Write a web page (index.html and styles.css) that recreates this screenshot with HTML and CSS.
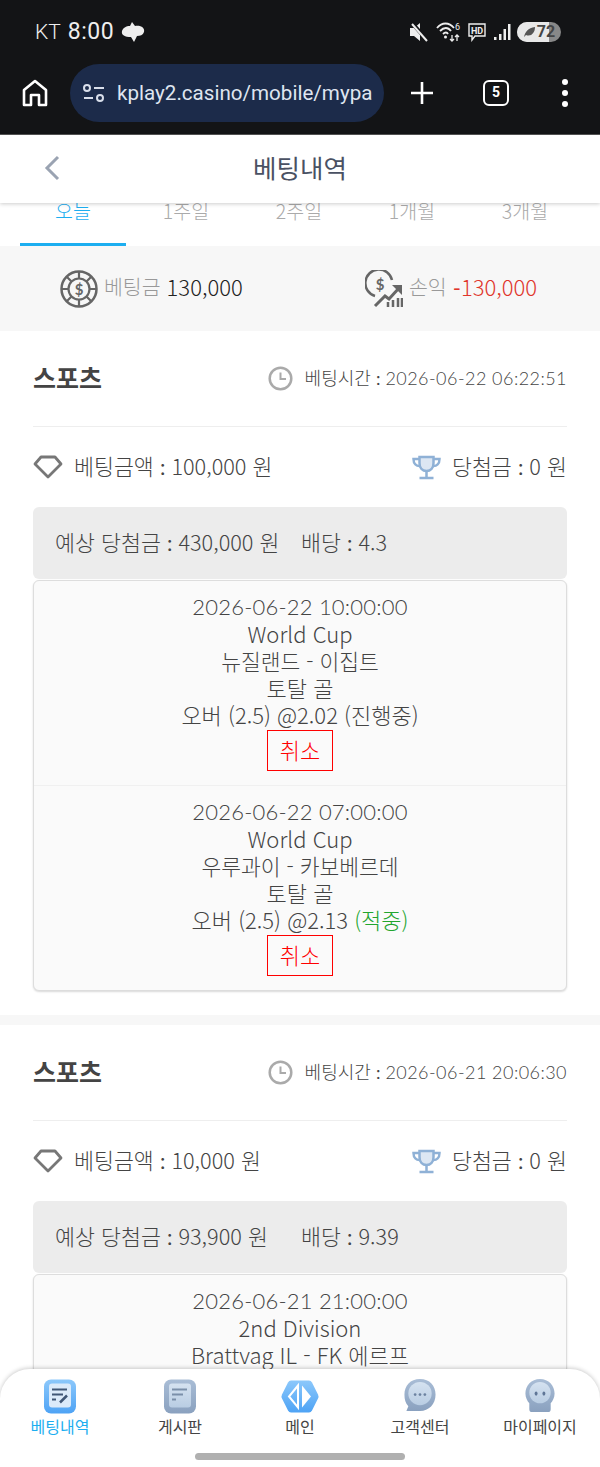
FILE: index.html
```html
<!DOCTYPE html>
<html lang="ko">
<head>
    <meta charset="UTF-8">
    <title>베팅내역</title>
    <link rel="stylesheet" href="styles.css">
</head>
<body>
<div class="phone">
    <div class="status-bar">
        <div class="status-bar__left">
            <span class="status-bar__carrier">KT</span>
            <span class="status-bar__time">8:00</span>
            <svg width="24" height="22" viewBox="0 0 24 22"><path d="M11 1 L14 5 C20 4 24 7 23 11 C22 14 19 15 16 15 L13 21 L10 16 C4 16 0 14 1 10 C2 7 5 5 9 5 Z" fill="#eee"/></svg>
        </div>
        <div class="status-bar__right">
            <svg width="22" height="20" viewBox="0 0 22 20"><path d="M2 6 H6 L12 1 V19 L6 14 H2 Z" fill="#eee"/><path d="M4 1 L19 18" stroke="#131416" stroke-width="4"/><path d="M4 2 L19 19" stroke="#eee" stroke-width="2"/></svg>
            <svg width="25" height="22" viewBox="0 0 25 22" fill="none" stroke="#eee" stroke-width="1.8"><path d="M1 7 C6 1 13 1 18 7"/><path d="M4 10 C8 6 12 6 15 10"/><path d="M7 13 C9 11 11 11 12 13"/><circle cx="9.500" cy="16" r="1.500" fill="#eee" stroke="none"/><path d="M16 14 V20 M14 18 L16 20 L18 18 M21 20 V14 M19 16 L21 14 L23 16" stroke-width="1.300"/><text x="19" y="9" class="status-bar__tiny">6</text></svg>
            <svg width="20" height="20" viewBox="0 0 20 20" fill="none" class="status-bar__hd" stroke="#eee" stroke-width="1.400"><path d="M2 2 H18 V14 H8 L5 18 V14 H2 Z"/><text x="10" y="12" class="status-bar__hd-text">HD</text></svg>
            <svg width="18" height="18" viewBox="0 0 18 18" fill="#eee"><rect x="1" y="14" width="2.500" height="3"/><rect x="6" y="11" width="2.500" height="6"/><rect x="10.500" y="6" width="2.500" height="11"/><rect x="15" y="1" width="2.500" height="16"/></svg>
            <div class="battery">
                <div class="battery__fill"></div>
                <svg class="battery__leaf" width="13" height="12" viewBox="0 0 13 12"><path d="M1 11 C2 6 5 2 12 1 C12 7 8 11 3 9 Z" fill="#555"/></svg>
                <span class="battery__num">72</span>
            </div>
        </div>
    </div>

    <div class="browser-bar">
        <svg class="browser-bar__home" width="26" height="28" viewBox="0 0 26 28" fill="none" stroke="#fff" stroke-width="2.600" stroke-linejoin="round"><path d="M2 26 V11 L13 2 L24 11 V26 H17 V16 H9 V26 Z"/></svg>
        <div class="address-pill">
            <svg width="24" height="20" viewBox="0 0 24 20" fill="none" stroke="#d8deea" stroke-width="2"><circle cx="5" cy="5" r="3"/><path d="M12 5 H22 M2 15 H11"/><circle cx="18" cy="15" r="3"/></svg>
            <span class="address-pill__url">kplay2.casino/mobile/mypa</span>
        </div>
        <svg class="browser-bar__plus" width="24" height="24" viewBox="0 0 24 24" stroke="#fff" stroke-width="2.600"><path d="M12 1 V23 M1 12 H23"/></svg>
        <div class="browser-bar__tabs">5</div>
        <div class="browser-bar__menu"><span></span><span></span><span></span></div>
    </div>

    <header class="top-header">
        <svg class="top-header__back" width="16" height="26" viewBox="0 0 16 26" fill="none" stroke="#9aa3b2" stroke-width="3"><path d="M14 2 L3 13 L14 24"/></svg>
        <h1 class="top-header__title">베팅내역</h1>
    </header>

    <nav class="period-tabs">
        <div class="period-tabs__item period-tabs__item--active">오늘</div>
        <div class="period-tabs__item">1주일</div>
        <div class="period-tabs__item">2주일</div>
        <div class="period-tabs__item">1개월</div>
        <div class="period-tabs__item">3개월</div>
    </nav>

    <section class="stats">
        <div class="stats__item">
            <svg width="38" height="38" viewBox="0 0 38 38" fill="none" stroke="#666">
                <circle cx="19" cy="19" r="17.500" stroke-width="2.500"/>
                <circle cx="19" cy="19" r="10.500" stroke-width="2.200"/>
                <path d="M19 2 V8 M19 30 V36 M2 19 H8 M30 19 H36 M7 7 L11.500 11.500 M31 7 L26.500 11.500 M7 31 L11.500 26.500 M31 31 L26.500 26.500" stroke-width="2.200"/>
                <text x="19" y="24.500" class="stats__dollar">$</text>
            </svg>
            <span class="stats__label">베팅금</span>
            <span class="stats__value">130,000</span>
        </div>
        <div class="stats__item">
            <svg width="38" height="38" viewBox="0 0 38 38" fill="none" stroke="#666">
                <path d="M10 26 A13.500 13.500 0 1 1 27 10" stroke-width="2.500"/>
                <text x="15" y="20" class="stats__dollar">$</text>
                <path d="M10 36 L20 26 L24 29 L34 18" stroke-width="3"/>
                <path d="M27 15 H37 V25 Z" fill="#666" stroke="none"/>
                <path d="M23 32 V37 M28 30 V37 M33 28 V37 M37 28 V37" stroke-width="2.500"/>
            </svg>
            <span class="stats__label">손익</span>
            <span class="stats__value stats__value--loss"><span class="mark">-</span>130,000</span>
        </div>
    </section>

    <article class="bet-card">
        <div class="bet-card__head">
            <h2 class="bet-card__type">스포츠</h2>
            <div class="bet-card__time">
                <svg width="25" height="25" viewBox="0 0 25 25" fill="none" stroke="#aaa" stroke-width="2.500"><circle cx="12.500" cy="12.500" r="10.800"/><path d="M12.500 6.500 V13 H18" stroke-width="2"/></svg>
                <span class="bet-card__text">베팅시간 <span class="mark">:</span> <span class="bet-card__date">2026-06-22 06:22:51</span></span>
            </div>
        </div>
        <div class="bet-card__summary">
            <div class="bet-card__amount">
                <svg width="30" height="24" viewBox="0 0 30 24" fill="none" stroke="#777" stroke-width="2.800" stroke-linejoin="round"><path d="M8 2 H22 L28 9 L15 22 L2 9 Z"/></svg>
                <span class="bet-card__text">베팅금액 <span class="mark">:</span> 100,000 원</span>
            </div>
            <div class="bet-card__amount">
                <svg width="29" height="25" viewBox="0 0 28 25" fill="none" stroke="#8fb1d6" stroke-width="2.500"><path d="M7 2 H21 V8 C21 13 18 16 14 16 C10 16 7 13 7 8 Z" fill="#8fb1d6" fill-opacity="0.300"/><path d="M7 4 H1 C1 9 4 11 7 11 M21 4 H27 C27 9 24 11 21 11 M14 16 V22 M7 23 H21"/></svg>
                <span class="bet-card__text">당첨금 <span class="mark">:</span> 0 원</span>
            </div>
        </div>
        <div class="bet-card__expected">
            <span class="bet-card__text bet-card__win">예상 당첨금 <span class="mark">:</span> 430,000 원</span>
            <span class="bet-card__text">배당 <span class="mark">:</span> 4.3</span>
        </div>
        <div class="bet-table">
            <div class="bet-table__item">
                <div class="bet-table__date">2026-06-22 10:00:00</div>
                <div>World Cup</div>
                <div class="bet-table__teams">뉴질랜드 - 이집트</div>
                <div>토탈 골</div>
                <div>오버 (2.5) @2.02 (진행중)</div>
                <button class="bet-table__cancel">취소</button>
            </div>
            <div class="bet-table__item">
                <div class="bet-table__date">2026-06-22 07:00:00</div>
                <div>World Cup</div>
                <div class="bet-table__teams">우루과이 - 카보베르데</div>
                <div>토탈 골</div>
                <div>오버 (2.5) @2.13 <span class="bet-table__hit">(적중)</span></div>
                <button class="bet-table__cancel">취소</button>
            </div>
        </div>
    </article>

    <article class="bet-card">
        <div class="bet-card__head">
            <h2 class="bet-card__type">스포츠</h2>
            <div class="bet-card__time">
                <svg width="25" height="25" viewBox="0 0 25 25" fill="none" stroke="#aaa" stroke-width="2.500"><circle cx="12.500" cy="12.500" r="10.800"/><path d="M12.500 6.500 V13 H18" stroke-width="2"/></svg>
                <span class="bet-card__text">베팅시간 <span class="mark">:</span> <span class="bet-card__date">2026-06-21 20:06:30</span></span>
            </div>
        </div>
        <div class="bet-card__summary">
            <div class="bet-card__amount">
                <svg width="30" height="24" viewBox="0 0 30 24" fill="none" stroke="#777" stroke-width="2.800" stroke-linejoin="round"><path d="M8 2 H22 L28 9 L15 22 L2 9 Z"/></svg>
                <span class="bet-card__text">베팅금액 <span class="mark">:</span> 10,000 원</span>
            </div>
            <div class="bet-card__amount">
                <svg width="29" height="25" viewBox="0 0 28 25" fill="none" stroke="#8fb1d6" stroke-width="2.500"><path d="M7 2 H21 V8 C21 13 18 16 14 16 C10 16 7 13 7 8 Z" fill="#8fb1d6" fill-opacity="0.300"/><path d="M7 4 H1 C1 9 4 11 7 11 M21 4 H27 C27 9 24 11 21 11 M14 16 V22 M7 23 H21"/></svg>
                <span class="bet-card__text">당첨금 <span class="mark">:</span> 0 원</span>
            </div>
        </div>
        <div class="bet-card__expected">
            <span class="bet-card__text bet-card__win">예상 당첨금 <span class="mark">:</span> 93,900 원</span>
            <span class="bet-card__text">배당 <span class="mark">:</span> 9.39</span>
        </div>
        <div class="bet-table">
            <div class="bet-table__item">
                <div class="bet-table__date">2026-06-21 21:00:00</div>
                <div>2nd Division</div>
                <div>Brattvag IL - FK 에르프</div>
                <div>토탈 골</div>
            </div>
        </div>
    </article>

    <nav class="bottom-nav">
        <a class="bottom-nav__item bottom-nav__item--active">
            <svg width="34" height="34" viewBox="0 0 34 34">
                <defs>
                    <linearGradient id="blueTile" x1="0" y1="0" x2="0" y2="1"><stop offset="0" stop-color="#8cc8fb"/><stop offset="1" stop-color="#4ea3f5"/></linearGradient>
                    <linearGradient id="greyTile" x1="0" y1="0" x2="0" y2="1"><stop offset="0" stop-color="#a9bdd6"/><stop offset="1" stop-color="#8aa1bf"/></linearGradient>
                    <linearGradient id="paleTile" x1="0" y1="0" x2="0" y2="1"><stop offset="0" stop-color="#d5e2f0"/><stop offset="1" stop-color="#b9cde3"/></linearGradient>
                </defs>
                <rect x="1" y="0" width="32" height="34" rx="7" fill="url(#blueTile)"/>
                <rect x="6" y="4" width="22" height="24" rx="3" fill="#dbeafa"/>
                <path d="M9 10 H24 M9 15 H20 M9 20 H13" stroke="#3f5575" stroke-width="2"/>
                <path d="M17 23 L24 16" stroke="#3f5575" stroke-width="2.500"/>
            </svg>
            <span>베팅내역</span>
        </a>
        <a class="bottom-nav__item">
            <svg width="34" height="34" viewBox="0 0 34 34">
                <rect x="1" y="0" width="32" height="34" rx="7" fill="url(#greyTile)"/>
                <rect x="6" y="4" width="22" height="24" rx="3" fill="url(#paleTile)"/>
                <path d="M9 10 H24 M9 15 H20 M9 20 H13" stroke="#7b8fa9" stroke-width="2"/>
            </svg>
            <span>게시판</span>
        </a>
        <a class="bottom-nav__item">
            <svg width="38" height="34" viewBox="0 0 38 34">
                <path d="M10 1 H28 Q30 1 31 3 L37 15 Q38 17 37 19 L31 31 Q30 33 28 33 H10 Q8 33 7 31 L1 19 Q0 17 1 15 L7 3 Q8 1 10 1 Z" fill="url(#blueTile)"/>
                <path d="M17 6 L8 17 L17 28 Z" fill="none" stroke="#fff" stroke-width="2"/>
                <path d="M21 6 L30 17 L21 28 Z" fill="#fff"/>
            </svg>
            <span>메인</span>
        </a>
        <a class="bottom-nav__item">
            <svg width="34" height="36" viewBox="0 0 34 36">
                <path d="M17 0 C27 0 33 7 33 16 C33 26 26 33 17 33 H3 L5 28 C2 25 1 21 1 16 C1 7 7 0 17 0 Z" fill="url(#greyTile)"/>
                <circle cx="17" cy="15" r="12" fill="url(#paleTile)"/>
                <circle cx="12" cy="16" r="1.400" fill="#6c82a0"/><circle cx="17" cy="16" r="1.400" fill="#6c82a0"/><circle cx="22" cy="16" r="1.400" fill="#6c82a0"/>
            </svg>
            <span>고객센터</span>
        </a>
        <a class="bottom-nav__item">
            <svg width="32" height="36" viewBox="0 0 32 36">
                <path d="M16 0 C25 0 31 7 31 15 C31 19 29 23 27 25 V31 Q27 34 24 34 H8 Q5 34 5 31 V25 C3 23 1 19 1 15 C1 7 7 0 16 0 Z" fill="url(#greyTile)"/>
                <circle cx="16" cy="14" r="11" fill="url(#paleTile)"/>
                <ellipse cx="12" cy="15" rx="1.500" ry="2.200" fill="#5f7697"/><ellipse cx="20" cy="15" rx="1.500" ry="2.200" fill="#5f7697"/>
            </svg>
            <span>마이페이지</span>
        </a>
        <div class="bottom-nav__gesture"></div>
    </nav>
</div>
</body>
</html>
```

FILE: styles.css
```css
* {
    box-sizing: border-box;
}

html,
body {
    margin: 0;
    padding: 0;
}

body {
    font-family: "Noto Sans CJK KR", sans-serif;
    font-weight: 300;
    color: #444;
    background-color: #fff;
}

/* 콜론, 하이픈은 Lato 글리프가 더 비슷함 */
.mark {
    font-family: "Lato", sans-serif;
    font-weight: 400;
}

.phone {
    position: relative;
    width: 600px;
    height: 1467px;
    overflow: hidden;
}

/* 상태바 */
.status-bar {
    display: flex;
    justify-content: space-between;
    align-items: center;
    height: 63px;
    padding: 0 39px 0 35px;
    background-color: #131416;
    color: #eee;
    font-family: "Roboto", sans-serif;
}

.status-bar__left {
    display: flex;
    align-items: center;
    gap: 7px;
}

.status-bar__carrier {
    font-size: 21px;
    font-weight: 300;
}

.status-bar__time {
    font-size: 23px;
    font-weight: 400;
    letter-spacing: 0.5px;
}

.status-bar__right {
    display: flex;
    align-items: center;
    gap: 6px;
}

.status-bar__tiny {
    font: 400 9px "Roboto", sans-serif;
    fill: #eee;
    stroke: none;
}

.status-bar__hd-text {
    font: 700 9px "Roboto", sans-serif;
    fill: #eee;
    stroke: none;
    text-anchor: middle;
}

.battery {
    position: relative;
    display: flex;
    align-items: center;
    justify-content: center;
    gap: 1px;
    width: 44px;
    height: 20px;
    border-radius: 10px;
    background-color: #888;
    overflow: hidden;
}

.battery__fill {
    position: absolute;
    left: 0;
    top: 0;
    bottom: 0;
    width: 32px;
    background-color: #e8e8e8;
}

.battery__leaf,
.battery__num {
    position: relative;
}

.battery__num {
    color: #444;
    font-size: 16px;
    font-weight: 700;
}

/* 브라우저 주소창 */
.browser-bar {
    display: flex;
    align-items: center;
    height: 72px;
    padding: 0 0 11px 22px;
    background-color: #131416;
    border-bottom: 1px solid #555;
}

.browser-bar__home {
    flex: none;
}

.address-pill {
    display: flex;
    align-items: center;
    gap: 11px;
    width: 314px;
    height: 58px;
    margin-left: 22px;
    padding: 0 12px;
    border-radius: 29px;
    background-color: #1c2b4a;
}

.address-pill svg {
    flex: none;
}

.address-pill__url {
    color: #dfe5f0;
    font-family: "Roboto", sans-serif;
    font-size: 20.600px;
    font-weight: 400;
    white-space: nowrap;
}

.browser-bar__plus {
    margin-left: 26px;
}

.browser-bar__tabs {
    width: 26px;
    height: 26px;
    margin-left: 49px;
    border: 2.500px solid #fff;
    border-radius: 6px;
    color: #fff;
    font: 700 14px/21px "Roboto", sans-serif;
    text-align: center;
}

.browser-bar__menu {
    display: flex;
    flex-direction: column;
    gap: 5px;
    margin-left: 53px;
}

.browser-bar__menu span {
    width: 6px;
    height: 6px;
    border-radius: 50%;
    background-color: #fff;
}

/* 상단 타이틀 */
.top-header {
    position: relative;
    z-index: 2;
    display: flex;
    align-items: center;
    justify-content: center;
    height: 68px;
    padding-bottom: 5px;
    background-color: #fff;
    box-shadow: 0 1px 4px rgba(0, 0, 0, 0.2);
}

.top-header__back {
    position: absolute;
    left: 44px;
    top: 20px;
}

.top-header__title {
    margin: 0;
    color: #4a5163;
    font-size: 25.500px;
    font-weight: 400;
}

/* 기간 탭 */
.period-tabs {
    display: grid;
    grid-template-columns: repeat(5, 106px);
    gap: 7px;
    height: 63px;
    margin-top: -20px;
    padding: 0 0 0 20px;
}

.period-tabs__item {
    padding-top: 16px;
    color: #aaa;
    font-size: 19.500px;
    line-height: 24px;
    text-align: center;
}

.period-tabs__item--active {
    color: #1daef0;
    border-bottom: 3px solid #1daef0;
}

/* 베팅금 / 손익 */
.stats {
    display: flex;
    height: 85px;
    background-color: #f7f7f7;
}

.stats__item {
    display: flex;
    align-items: center;
    gap: 6px;
    font-size: 22px;
}

.stats__item:first-child {
    width: 365px;
    padding-left: 60px;
}

.stats__dollar {
    font: 700 15px "Lato", sans-serif;
    fill: #666;
    stroke: none;
    text-anchor: middle;
}

.stats__label,
.stats__value {
    margin-bottom: 5px;
}

.stats__label {
    color: #999;
    font-size: 20.500px;
}

.stats__value {
    color: #222;
}

.stats__value--loss {
    color: #e0352b;
}

/* 베팅 카드 */
.bet-card {
    height: 694px;
    padding: 0 33px;
    background-color: #fff;
    border-bottom: 10px solid #f7f7f7;
}

.bet-card__head {
    display: flex;
    justify-content: space-between;
    align-items: center;
    height: 96px;
    border-bottom: 1px solid #eee;
}

.bet-card__type {
    margin: 0 0 4px;
    color: #444;
    font-size: 25px;
    font-weight: 700;
}

.bet-card__time {
    display: flex;
    align-items: center;
    gap: 12px;
    font-size: 18px;
}

.bet-card__text {
    margin-bottom: 3px;
}

.bet-card__date {
    font-family: "Lato", sans-serif;
    letter-spacing: 0.450px;
}

.bet-card__summary {
    display: flex;
    justify-content: space-between;
    align-items: center;
    height: 80px;
    font-size: 21.700px;
}

.bet-card__amount {
    display: flex;
    align-items: center;
    gap: 11px;
}

.bet-card__expected {
    display: flex;
    align-items: center;
    height: 72px;
    padding: 0 22px;
    border-radius: 6px;
    background-color: #ececec;
    font-size: 21.700px;
}

.bet-card__win {
    width: 246px;
}

.bet-table {
    margin-top: 1px;
    border: 1px solid #ddd;
    border-radius: 6px;
    background-color: #fafafa;
    box-shadow: 0 1px 2px rgba(0, 0, 0, 0.15);
    font-size: 22px;
    line-height: 27px;
    text-align: center;
}

.bet-table__item {
    padding: 12px 0 14px;
    border-bottom: 1px solid #f0f0f0;
}

.bet-table__item:last-child {
    border-bottom: none;
}

.bet-table__date {
    font-family: "Lato", sans-serif;
    letter-spacing: 0.200px;
}

.bet-table__teams {
    font-size: 21.500px;
}

.bet-table__cancel {
    display: block;
    width: 66px;
    height: 41px;
    margin: 2px auto 0;
    padding: 0 0 3px;
    border: 1px solid #f00;
    background: none;
    color: #f00;
    font: inherit;
}

.bet-table__hit {
    color: #22a52e;
}

/* 하단 메뉴 */
.bottom-nav {
    position: absolute;
    left: 0;
    right: 0;
    bottom: 0;
    z-index: 3;
    display: grid;
    grid-template-columns: repeat(5, 120px);
    height: 98px;
    padding-top: 10px;
    border-radius: 30px 30px 0 0;
    background-color: #fff;
    box-shadow: 0 -1px 4px rgba(0, 0, 0, 0.2);
}

.bottom-nav__item {
    display: flex;
    flex-direction: column;
    align-items: center;
    height: 60px;
    color: #444;
    font-size: 16px;
    font-weight: 400;
}

.bottom-nav__item svg {
    flex: none;
    height: 35px;
}

.bottom-nav__item span {
    line-height: 24px;
}

.bottom-nav__item--active {
    color: #1daef0;
}

.bottom-nav__gesture {
    position: absolute;
    left: 195px;
    bottom: 7px;
    width: 210px;
    height: 7px;
    border-radius: 4px;
    background-color: #b0b0b0;
}
```
